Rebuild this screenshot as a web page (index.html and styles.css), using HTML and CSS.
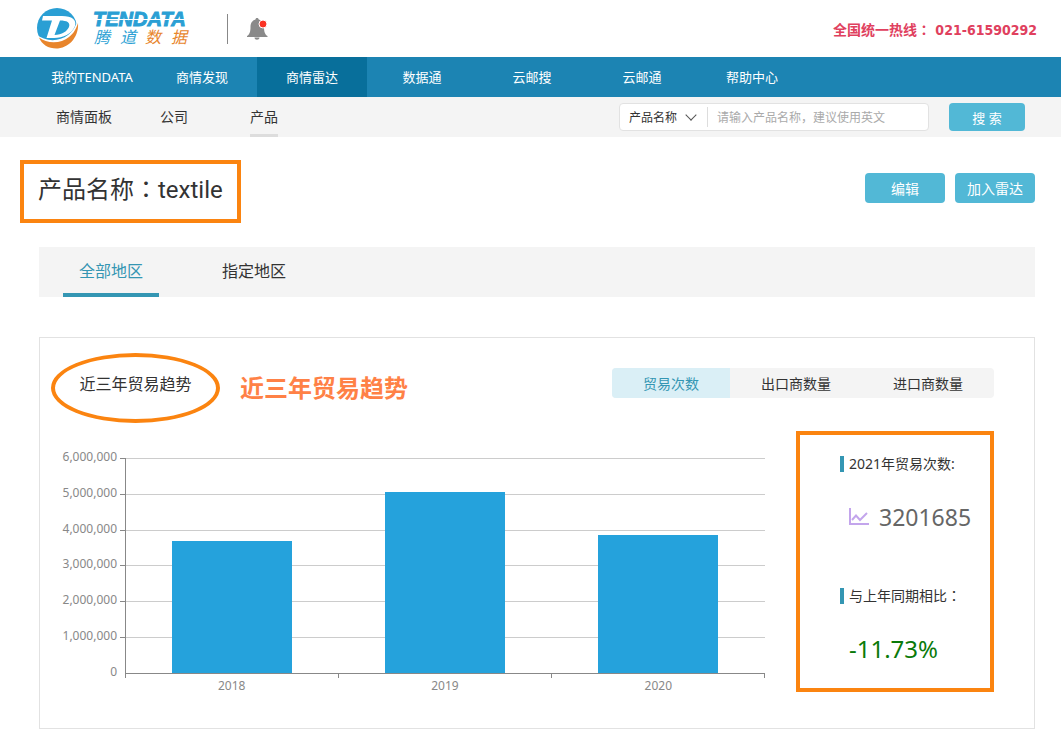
FILE: index.html
```html
<!DOCTYPE html>
<html lang="zh-CN">
    <head>
        <meta charset="utf-8">
        <title>腾道数据</title>
        <link rel="stylesheet" href="styles.css">
    </head>
    <body>
        <header class="top">
            <a class="logo" href="#" aria-label="TENDATA 腾道数据">
                <svg width="160" height="48" viewBox="0 0 160 48">
                    <circle cx="21" cy="23" r="20" fill="#2a9fd4"/>
                    <path fill="#fff" d="M0 29C9 37 23 37 32 30C37 26 40 21 42 14L46 20L40 48H0Z"/>
                    <path fill="#e8852c" d="M3 32.500C11 39 25 39 33 32C38 28 40 24 42 18C43 30 35 42 22 43.500C13 44 6 40 3 32.500Z"/>
                    <path fill="#fff" d="M7 11H26C36 11 41 15 39 21C36 29 27 33 18 33H10.500L16 15.500H6ZM24 15.500L18.500 30C26 29.500 31 26.500 33 22C34.500 17.500 31 15.500 24 15.500Z"/>
                    <text class="logo-en" x="57" y="21">TENDATA</text>
                    <path stroke="#fff" d="M58 14.500H158"/>
                    <text class="logo-cn" y="38"><tspan x="58">腾</tspan><tspan x="84">道</tspan><tspan class="logo-orange" x="109">数</tspan><tspan class="logo-orange" x="135">据</tspan></text>
                </svg>
            </a>
            <a class="bell" href="#" aria-label="消息">
                <svg width="24" height="26" viewBox="0 0 24 26">
                    <path fill="#8a8a8a" d="M11 2C12 2 12.700 2.700 12.700 3.500C16.500 4.500 18 7.500 18 11C18 16 19 18.500 21.500 20V21H1V20C3.500 18.500 4.500 16 4.500 11C4.500 7.500 6 4.500 9.500 3.500C9.500 2.700 10 2 11 2ZM8.500 21.500H13.500C13.500 24.500 8.500 24.500 8.500 21.500Z"/>
                    <circle cx="17" cy="8" r="4" fill="#fa3224" stroke="#fff"/>
                </svg>
            </a>
            <p class="hotline">全国统一热线<span class="colon" lang="zh-TW">：</span> 021-61590292</p>
        </header>
        <nav class="nav">
            <a href="#">我的TENDATA</a>
            <a href="#">商情发现</a>
            <a class="on" href="#">商情雷达</a>
            <a href="#">数据通</a>
            <a href="#">云邮搜</a>
            <a href="#">云邮通</a>
            <a href="#">帮助中心</a>
        </nav>
        <div class="subnav">
            <nav class="sublinks">
                <a href="#"><span>商情面板</span></a>
                <a href="#"><span>公司</span></a>
                <a class="on" href="#"><span>产品</span></a>
            </nav>
            <form class="search">
                <div class="search-box">
                    <div class="search-type">
                        <select aria-label="搜索类型"><option>产品名称</option></select>
                    </div>
                    <input type="text" aria-label="搜索内容" placeholder="请输入产品名称，建议使用英文">
                </div>
                <button class="btn" type="button">搜 索</button>
            </form>
        </div>
        <main>
            <div class="title-row">
                <h1>产品名称<span class="colon" lang="zh-TW">：</span>textile</h1>
                <div class="actions">
                    <button class="btn" type="button">编辑</button>
                    <button class="btn" type="button">加入雷达</button>
                </div>
            </div>
            <div class="tabs">
                <button class="on" type="button">全部地区</button>
                <button type="button">指定地区</button>
            </div>
            <section class="card">
                <div class="card-head">
                    <h2>近三年贸易趋势</h2>
                    <strong class="note">近三年贸易趋势</strong>
                    <div class="switch">
                        <button class="on" type="button">贸易次数</button>
                        <button type="button">出口商数量</button>
                        <button type="button">进口商数量</button>
                    </div>
                </div>
                <div class="card-body">
                    <div class="chart">
                        <div class="y-labels">
                            <span>6,000,000</span>
                            <span>5,000,000</span>
                            <span>4,000,000</span>
                            <span>3,000,000</span>
                            <span>2,000,000</span>
                            <span>1,000,000</span>
                            <span>0</span>
                        </div>
                        <div class="plot">
                            <div class="lines"><i></i><i></i><i></i><i></i><i></i><i></i></div>
                            <div class="bars">
                                <div class="bar" style="height: 61.4%"></div>
                                <div class="bar" style="height: 84.2%"></div>
                                <div class="bar" style="height: 64.2%"></div>
                            </div>
                        </div>
                        <div class="x-axis">
                            <div class="x-ticks"><i></i><i></i><i></i></div>
                            <div class="x-labels"><span>2018</span><span>2019</span><span>2020</span></div>
                        </div>
                    </div>
                    <div class="stats">
                        <h3>2021年贸易次数:</h3>
                        <p class="count">
                            <svg width="20" height="18" viewBox="0 0 20 18" fill="none" stroke="#c3a5ec" stroke-width="2">
                                <path d="M1 0V16H20"/>
                                <path d="M3 12L7 7.500L11 12L18 5"/>
                            </svg>
                            3201685
                        </p>
                        <h3><span>与上年同期相比<span class="colon" lang="zh-TW">：</span></span></h3>
                        <p class="rate">-11.73%</p>
                    </div>
                </div>
            </section>
        </main>
    </body>
</html>
```
FILE: styles.css
```css
*{
    box-sizing: border-box;
    margin: 0;
}
body{
    background-color: white;
    color: #333;
    font-family: "Noto Sans", "Noto Sans CJK SC", sans-serif;
    font-size: 14px;
}
a{
    color: inherit;
    text-decoration: none;
}
button, input, select{
    border: 0;
    padding: 0;
    color: inherit;
    background: none;
    font: inherit;
}
h1, h2, h3{
    font-weight: normal;
}
/* the TC face centres the full-width colon */
.colon{
    font-family: "Noto Sans CJK TC", sans-serif;
    line-height: 1;
}
.top{
    display: flex;
    align-items: center;
    height: 57px;
    padding: 0 24px 0 36px;
}
.logo{
    display: flex;
}
.logo-en{
    fill: #2a9fd4;
    font: italic bold 20px "Liberation Sans", sans-serif;
    stroke: #2a9fd4;
}
.logo-cn{
    fill: #2a9fd4;
    font: italic 16px "Noto Sans CJK SC", sans-serif;
}
.logo-orange{
    fill: #e8852c;
}
.bell{
    display: flex;
    align-items: center;
    height: 30px;
    margin-left: 31px;
    padding-left: 18px;
    border-left: 1px solid #888;
}
.hotline{
    margin-left: auto;
    color: #e0405e;
    font: bold 14px "DejaVu Sans Condensed", "Noto Sans CJK SC", sans-serif;
}
.nav{
    display: flex;
    height: 40px;
    padding-left: 37px;
    background-color: #1c84b3;
    color: white;
    font-size: 13px;
    line-height: 40px;
}
.nav a{
    width: 110px;
    text-align: center;
}
.nav .on{
    background-color: #086f9b;
}
.subnav{
    display: flex;
    justify-content: space-between;
    align-items: center;
    height: 40px;
    padding: 0 36px 0 39px;
    background-color: #f4f4f4;
}
.sublinks{
    display: flex;
    line-height: 40px;
}
.sublinks a{
    width: 90px;
    text-align: center;
}
.sublinks span{
    display: inline-block;
    height: 40px;
}
.sublinks .on span{
    border-bottom: 3px solid #ddd;
}
.search{
    display: flex;
    gap: 20px;
    height: 28px;
}
.search-box{
    display: flex;
    align-items: center;
    width: 310px;
    border: 1px solid #e2e2e2;
    border-radius: 4px;
    background-color: white;
    font-size: 12px;
}
.search-type{
    position: relative;
    width: 88px;
    padding-left: 9px;
    border-right: 1px solid #ddd;
}
.search-type::after{
    content: "";
    position: absolute;
    top: 4px;
    right: 12px;
    width: 7px;
    height: 7px;
    border: solid #555;
    border-width: 0 1px 1px 0;
    transform: rotate(45deg);
    pointer-events: none;
}
.search-type select{
    appearance: none;
    width: 100%;
    height: 20px;
}
.search-box input{
    flex: 1;
    min-width: 0;
    padding: 0 9px;
}
.search-box input::placeholder{
    color: #aaa;
}
.btn{
    border-radius: 4px;
    background-color: #52b8d6;
    color: white;
}
.search .btn{
    width: 76px;
    font-size: 13px;
}
main{
    padding: 23px 26px 20px 39px;
}
.title-row{
    display: flex;
    justify-content: space-between;
}
.title-row h1{
    height: 63px;
    margin-left: -19px;
    padding: 0 14px;
    border: 4px solid #fb8410;
    font-family: Roboto, "Noto Sans CJK SC", sans-serif;
    font-size: 24px;
    line-height: 53px;
}
.actions{
    display: flex;
    gap: 10px;
    padding-top: 13px;
}
.actions .btn{
    width: 80px;
    height: 30px;
}
.tabs{
    display: flex;
    gap: 47px;
    height: 50px;
    margin-top: 24px;
    padding-left: 24px;
    background-color: #f4f4f4;
}
.tabs button{
    width: 96px;
    border: solid transparent;
    border-width: 0 0 4px;
    font-size: 16px;
}
.tabs .on{
    border-color: #3496b3;
    color: #3496b3;
}
.card{
    margin-top: 40px;
    padding: 15px 40px 34px 11px;
    border: 1px solid #e2e2e2;
}
.card-head{
    display: flex;
    gap: 20px;
}
.card-head h2{
    width: 169px;
    height: 70px;
    border: 4px solid #fb8410;
    border-radius: 50%;
    font-size: 16px;
    line-height: 54px;
    text-align: center;
}
.note{
    color: #ff8146;
    font-size: 24px;
    line-height: 70px;
}
.switch{
    display: flex;
    height: 30px;
    margin: 15px 0 0 auto;
    border-radius: 4px;
    overflow: hidden;
    background-color: #f4f4f4;
}
.switch button{
    width: 132px;
}
.switch .on{
    width: 118px;
    background-color: #daeff6;
    color: #3496b3;
}
.card-body{
    display: flex;
    gap: 31px;
    margin-top: 8px;
}
.chart{
    display: grid;
    flex: 1;
    grid-template: 216px auto / 66px 1fr;
    column-gap: 8px;
    padding-top: 27px;
    color: #888;
    font-size: 12px;
    line-height: 16px;
}
.y-labels{
    display: flex;
    flex-direction: column;
    justify-content: space-between;
    height: 231px;
    margin-top: -9px;
    text-align: right;
}
.plot{
    display: grid;
    border: solid #888;
    border-width: 0 0 1px 1px;
}
.lines, .bars{
    grid-area: 1 / 1;
    display: flex;
}
.lines{
    flex-direction: column;
}
.lines i{
    flex: 1;
    border-top: 1px solid #ccc;
}
/* axis ticks stick out to the left of the plot */
.lines i::before{
    content: "";
    display: block;
    width: 5px;
    height: 1px;
    margin: -1px 0 0 -6px;
    background-color: #888;
}
.bars{
    align-items: flex-end;
    justify-content: space-around;
    margin-left: -1px;
}
.bar{
    width: 120px;
    background-color: #25a2dc;
}
.x-axis{
    grid-column: 2;
}
.x-ticks, .x-labels{
    display: flex;
}
.x-ticks i{
    flex: 1;
    height: 4px;
    border-left: 1px solid #888;
}
.x-ticks i:last-child{
    border-right: 1px solid #888;
}
.x-labels span{
    flex: 1;
    text-align: center;
}
.stats{
    width: 198px;
    height: 261px;
    padding: 21px 0 0 40px;
    border: 4px solid #fb8410;
}
.stats h3{
    display: flex;
    align-items: center;
    gap: 5px;
    height: 16px;
    font-size: 14px;
    line-height: 16px;
}
.stats h3::before{
    content: "";
    width: 4px;
    height: 16px;
    background-color: #3496b3;
}
.stats p{
    padding-left: 9px;
    line-height: 32px;
}
.stats .count{
    display: flex;
    align-items: center;
    gap: 10px;
    margin: 29px 0 55px;
    color: #666;
    font-size: 23px;
}
.stats .rate{
    margin-top: 29px;
    color: #0a7a0a;
    font-size: 24px;
}
```
